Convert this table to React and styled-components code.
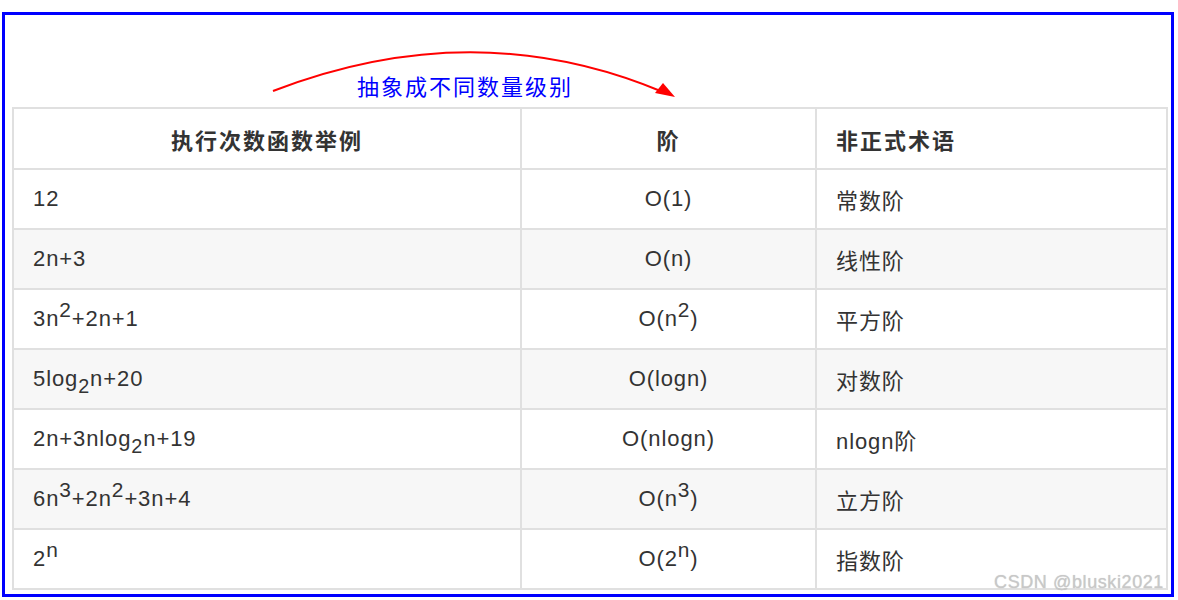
import React from "react";
import styled, { createGlobalStyle } from "styled-components";

const GlobalStyle = createGlobalStyle`
  body {
    margin: 0;
    background: #ffffff;
    font-family: "Liberation Sans", "Noto Sans CJK SC", sans-serif;
  }
`;

const Frame = styled.div`
  position: relative;
  box-sizing: border-box;
  margin: 12px 0 0 2px;
  width: 1172px;
  height: 585px;
  border: 3px solid #0000ff;
  padding: 0 3px 2px 7px;
`;

const Annotation = styled.div`
  position: relative;
  height: 92px;
  box-sizing: border-box;
  padding: 57px 0 0 345px;
`;

const Label = styled.span`
  font-size: 22px;
  line-height: 26px;
  letter-spacing: 2px;
  color: #0000ff;
  font-family: "Noto Sans CJK SC", sans-serif;
`;

const Arrow = styled.svg`
  position: absolute;
  left: -7px;
  top: 0;
  pointer-events: none;
`;

const Table = styled.table`
  width: 1154px;
  border-collapse: collapse;
  table-layout: fixed;
  color: #333333;
`;

const Row = styled.tr`
  background: ${(p) => (p.$striped ? "#f7f7f7" : "#ffffff")};
`;

const HeadCell = styled.th`
  height: 59px;
  padding: 0 19px;
  border: 2px solid #e0e0e0;
  font-size: 22px;
  font-weight: bold;
  letter-spacing: 2px;
  text-align: ${(p) => p.$align || "center"};
  color: #333333;
`;

const Cell = styled.td`
  height: 58px;
  padding: 0 19px;
  border: 2px solid #e0e0e0;
  font-size: 22px;
  letter-spacing: 0.9px;
  text-align: ${(p) => p.$align || "left"};
  white-space: nowrap;
`;

const Sup = styled.sup`
  font-size: 0.95em;
  line-height: 0;
  vertical-align: 0.45em;
`;

const Sub = styled.sub`
  font-size: 0.9em;
  line-height: 0;
  vertical-align: -0.35em;
`;

const Watermark = styled.div`
  position: absolute;
  right: 7px;
  bottom: 1px;
  font-size: 18px;
  letter-spacing: 0.6px;
  color: #c8c8c8;
  text-shadow: 0 0 1px rgba(0, 0, 0, 0.2);
`;

const rows = [
  [<>12</>, <>O(1)</>, "常数阶"],
  [<>2n+3</>, <>O(n)</>, "线性阶"],
  [
    <>3n<Sup>2</Sup>+2n+1</>,
    <>O(n<Sup>2</Sup>)</>,
    "平方阶",
  ],
  [<>5log<Sub>2</Sub>n+20</>, <>O(logn)</>, "对数阶"],
  [<>2n+3nlog<Sub>2</Sub>n+19</>, <>O(nlogn)</>, "nlogn阶"],
  [
    <>6n<Sup>3</Sup>+2n<Sup>2</Sup>+3n+4</>,
    <>O(n<Sup>3</Sup>)</>,
    "立方阶",
  ],
  [<>2<Sup>n</Sup></>, <>O(2<Sup>n</Sup>)</>, "指数阶"],
];

const App = () => {
  return (
    <>
      <GlobalStyle />
      <Frame>
        <Annotation>
          <Arrow width="700" height="92" viewBox="0 0 700 92">
            <path
              d="M268 76 Q470 -2 658 77"
              fill="none"
              stroke="#ff0000"
              strokeWidth="2"
            />
            <polygon points="670,82 650,78 658,68" fill="#ff0000" />
          </Arrow>
          <Label>抽象成不同数量级别</Label>
        </Annotation>
        <Table>
          <colgroup>
            <col style={{ width: 508 }} />
            <col style={{ width: 295 }} />
            <col style={{ width: 351 }} />
          </colgroup>
          <thead>
            <Row>
              <HeadCell>执行次数函数举例</HeadCell>
              <HeadCell>阶</HeadCell>
              <HeadCell $align="left">非正式术语</HeadCell>
            </Row>
          </thead>
          <tbody>
            {rows.map((r, i) => (
              <Row key={i} $striped={i % 2 === 1}>
                <Cell>{r[0]}</Cell>
                <Cell $align="center">{r[1]}</Cell>
                <Cell>{r[2]}</Cell>
              </Row>
            ))}
          </tbody>
        </Table>
        <Watermark>CSDN @bluski2021</Watermark>
      </Frame>
    </>
  );
};

export default App;
